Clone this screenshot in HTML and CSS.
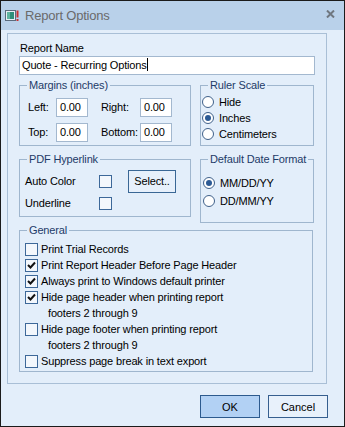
FILE: index.html
```html
<!doctype html>
<html lang="en">
  <head>
    <meta charset="UTF-8" />
    <meta name="viewport" content="width=device-width, initial-scale=1.0" />
    <title>Report Options</title>
    <link rel="stylesheet" href="styles.css">
  </head>
  <body>
    <div class="window">
      <div class="titlebar">
        <svg class="app-icon" width="14" height="12" viewBox="0 0 14 12">
          <rect x="0.5" y="0.5" width="10" height="10" fill="#e8eef5" stroke="#5a6b7d" />
          <rect x="2" y="2" width="7" height="7" fill="#2f8f7a" />
          <rect x="2" y="2" width="3" height="7" fill="#5fb4a0" />
          <rect x="11.5" y="0.5" width="2" height="7" fill="#c83232" />
          <rect x="11.5" y="9" width="2" height="2" fill="#c83232" />
        </svg>
        <span class="title">Report Options</span>
        <svg class="close" width="9" height="8" viewBox="0 0 9 8">
          <path d="M1 0.5 L8 7.5 M8 0.5 L1 7.5" stroke="#6f7780" stroke-width="2" />
        </svg>
      </div>
      <div class="content">
        <div class="panel">
          <div class="label">Report Name</div>
          <div class="field name-field">Quote - Recurring Options<span class="caret"></span></div>

          <div class="row row-top">
            <fieldset class="group margins">
              <legend>Margins (inches)</legend>
              <div class="margin-grid">
                <span>Left:</span>
                <div class="field small">0.00</div>
                <span class="far">Right:</span>
                <div class="field small">0.00</div>
                <span>Top:</span>
                <div class="field small">0.00</div>
                <span class="far">Bottom:</span>
                <div class="field small">0.00</div>
              </div>
            </fieldset>
            <fieldset class="group ruler">
              <legend>Ruler Scale</legend>
              <div class="radio-list">
                <div class="radio"><span class="dot"></span>Hide</div>
                <div class="radio"><span class="dot on"></span>Inches</div>
                <div class="radio"><span class="dot"></span>Centimeters</div>
              </div>
            </fieldset>
          </div>

          <div class="row row-mid">
            <fieldset class="group pdf">
              <legend>PDF Hyperlink</legend>
              <div class="pdf-grid">
                <span>Auto Color</span>
                <span class="check"></span>
                <button class="select-btn">Select..</button>
                <span>Underline</span>
                <span class="check"></span>
              </div>
            </fieldset>
            <fieldset class="group date">
              <legend>Default Date Format</legend>
              <div class="radio-list date-list">
                <div class="radio"><span class="dot on"></span>MM/DD/YY</div>
                <div class="radio"><span class="dot"></span>DD/MM/YY</div>
              </div>
            </fieldset>
          </div>

          <fieldset class="group general">
            <legend>General</legend>
            <div class="check-list">
              <div class="option"><span class="check"></span>Print Trial Records</div>
              <div class="option"><span class="check on"><svg width="11" height="11" viewBox="0 0 11 11"><path d="M2 5 L4.5 7.5 L9 2.5" fill="none" stroke="#111" stroke-width="2" /></svg></span>Print Report Header Before Page Header</div>
              <div class="option"><span class="check on"><svg width="11" height="11" viewBox="0 0 11 11"><path d="M2 5 L4.5 7.5 L9 2.5" fill="none" stroke="#111" stroke-width="2" /></svg></span>Always print to Windows default printer</div>
              <div class="option"><span class="check on"><svg width="11" height="11" viewBox="0 0 11 11"><path d="M2 5 L4.5 7.5 L9 2.5" fill="none" stroke="#111" stroke-width="2" /></svg></span>Hide page header when printing report</div>
              <div class="option more">footers 2 through 9</div>
              <div class="option"><span class="check"></span>Hide page footer when printing report</div>
              <div class="option more">footers 2 through 9</div>
              <div class="option"><span class="check"></span>Suppress page break in text export</div>
            </div>
          </fieldset>
        </div>

        <div class="buttons">
          <button class="btn btn-ok">OK</button>
          <button class="btn">Cancel</button>
        </div>
      </div>
    </div>
  </body>
</html>
```

FILE: styles.css
```css
html,
body {
  margin: 0;
}

body {
  font-family: "Liberation Sans", Arial, sans-serif;
  font-size: 11px;
  line-height: 13px;
  letter-spacing: -0.15px;
  color: #000;
  background-color: #e3eefa;
}

.window {
  width: 345px;
  height: 427px;
  box-sizing: border-box;
  border: 1px solid #1b1b1b;
  background-color: #e3eefa;
  display: flex;
  flex-direction: column;
}

.titlebar {
  height: 29px;
  flex: none;
  background-color: #b9d1ea;
  display: flex;
  align-items: center;
  padding-left: 4px;
}

.app-icon {
  display: block;
  margin-top: 1px;
}

.title {
  margin-left: 6px;
  font-size: 13px;
  letter-spacing: -0.2px;
  color: #6a6a6a;
}

.close {
  display: block;
  margin-left: auto;
  margin-right: 9px;
  margin-bottom: 3px;
}

.content {
  padding: 3px 16px 0 6px;
}

.panel {
  width: 320px;
  box-sizing: border-box;
  border: 1px solid #a9bfd6;
  padding: 8px 11px 11px 11px;
}

.label {
  padding-left: 1px;
}

.field {
  box-sizing: border-box;
  height: 19px;
  border: 1px solid #a3b8cf;
  background-color: #fff;
  padding: 0 3px;
  line-height: 17px;
  white-space: nowrap;
}

.name-field {
  margin-top: 1px;
  width: 296px;
  padding-left: 2px;
}

.caret {
  display: inline-block;
  width: 1px;
  height: 13px;
  background-color: #000;
  vertical-align: -2px;
}

.row {
  display: flex;
  gap: 9px;
  align-items: flex-start;
}

.row-top {
  margin-top: 4px;
}

.row-mid {
  margin-top: 7px;
}

.group {
  margin: 0;
  padding: 0;
  min-width: 0;
  border: 1px solid #9fb6ce;
  box-sizing: border-box;
}

.group legend {
  padding: 0 2px;
  margin-left: 7px;
  line-height: 13px;
  color: #1e3b68;
}

.margins,
.pdf {
  width: 172px;
}

.ruler,
.date {
  width: 114px;
}

.margin-grid {
  display: grid;
  grid-template-columns: 28px 32px 52px 32px;
  grid-auto-rows: 19px;
  row-gap: 6px;
  align-items: center;
  padding: 6px 0 3px 8px;
}

.margin-grid .far {
  padding-left: 13px;
}

.radio-list {
  padding: 2px 0 3px 1px;
}

.date-list {
  padding: 8px 0 12px 2px;
}

.radio {
  height: 16px;
  display: flex;
  align-items: center;
}

.date-list .radio {
  height: 18px;
}

.dot {
  width: 12px;
  height: 12px;
  box-sizing: border-box;
  border: 1px solid #40618a;
  border-radius: 50%;
  background-color: #fff;
  margin-right: 5px;
  display: flex;
  align-items: center;
  justify-content: center;
}

.dot.on::after {
  content: "";
  width: 6px;
  height: 6px;
  border-radius: 50%;
  background-color: #2c5a94;
}

.pdf-grid {
  display: grid;
  grid-template-columns: 74px 13px 64px;
  grid-auto-rows: 22px;
  align-items: center;
  padding: 4px 0 2px 5px;
}

.check {
  width: 13px;
  height: 13px;
  box-sizing: border-box;
  border: 1px solid #3d6899;
  background-color: #f3f7fc;
  display: flex;
  align-items: center;
  justify-content: center;
  flex: none;
}

.check svg {
  display: block;
}

.select-btn {
  margin-left: 16px;
  width: 48px;
  height: 23px;
  box-sizing: border-box;
  border: 1px solid #3a6795;
  background-color: #e7f0fb;
  font-family: inherit;
  font-size: 11px;
  letter-spacing: inherit;
  padding: 0;
  color: #000;
}

.general {
  width: 294px;
  margin-top: 1px;
}

.check-list {
  padding: 4px 0 2px 5px;
}

.option {
  height: 16px;
  display: flex;
  align-items: center;
  white-space: nowrap;
}

.option .check {
  margin-right: 3px;
}

.option.more {
  padding-left: 23px;
}

.buttons {
  display: flex;
  justify-content: flex-end;
  gap: 8px;
  margin-top: 11px;
}

.btn {
  width: 60px;
  height: 23px;
  box-sizing: border-box;
  border: 1px solid #365f8f;
  background-color: #e8f1fb;
  font-family: inherit;
  font-size: 11px;
  color: #000;
  padding: 0;
}

.btn-ok {
  background-color: #b2d1f4;
  border-color: #2c5a8e;
}
```
